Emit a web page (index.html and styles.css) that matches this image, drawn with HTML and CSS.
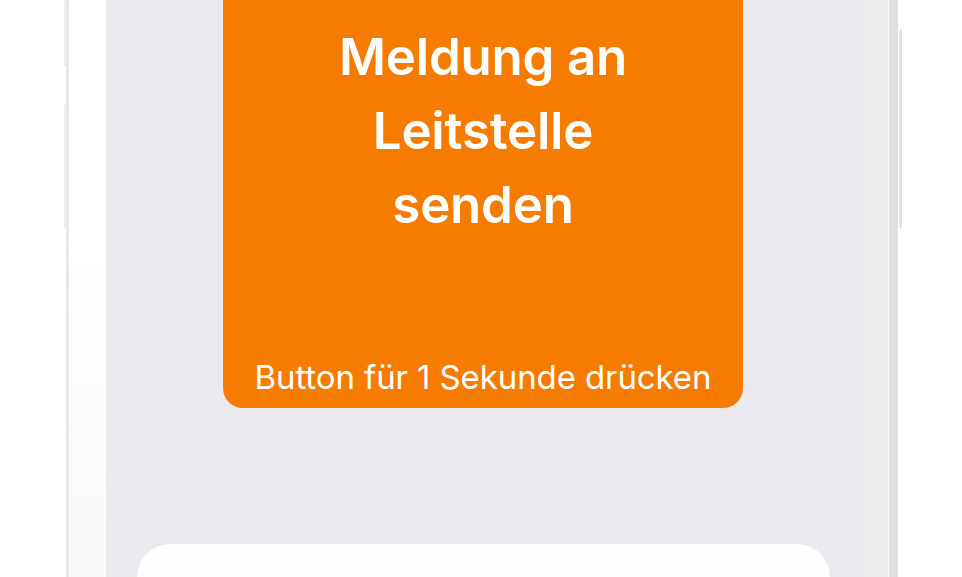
FILE: index.html
```html
<!DOCTYPE html>
<html lang="de">
<head>
  <meta charset="UTF-8" />
  <meta name="viewport" content="width=device-width, initial-scale=1.0" />
  <title>Meldung an Leitstelle</title>
  <link rel="stylesheet" href="styles.css">
</head>
<body>

  <div class="phone">
    <span class="side-btn left-a"></span>
    <span class="side-btn left-b"></span>
    <span class="side-btn right-a"></span>

    <div class="bezel-left"></div>

    <div class="screen">
      <div class="alert-btn">
        <h1 class="alert-title">Meldung an<br>Leitstelle<br>senden</h1>
        <p class="alert-hint">Button für 1 Sekunde drücken</p>
      </div>
      <div class="card"></div>
    </div>

    <div class="bezel-right">
      <div class="bezel-inner"></div>
      <div class="bezel-edge"></div>
    </div>
  </div>

</body>
</html>
```

FILE: styles.css
```css
body {
  font-family: Inter, "Noto Sans", sans-serif;
  background: #fff;
  margin: 0;
  padding: 0;
  width: 962px;
  height: 577px;
  overflow: hidden;
}
.phone {
  position: relative;
  display: flex;
  margin-left: 66px;
  width: 832px;
  height: 577px;
}
.side-btn {
  position: absolute;
  width: 2px;
  background: #ececec;
  border-radius: 2px;
}
.left-a { left: -2px; top: 0; height: 66px; }
.left-b { left: -2px; top: 104px; height: 124px; }
.right-a { right: -4px; top: 29px; height: 199px; width: 3px; background: #e2e2e2; }

.bezel-left {
  width: 37px;
  border-left: 3px solid #e8e8e8;
  background: linear-gradient(to bottom, #ffffff 40%, #f9f9f9);
}
.screen {
  flex: 1;
  background: #e9e9ee;
  display: flex;
  flex-direction: column;
  align-items: center;
}
.alert-btn {
  flex-shrink: 0;
  width: 520px;
  height: 408px;
  background: #f57c00;
  border-radius: 0 0 20px 20px;
  color: #fff;
  display: flex;
  flex-direction: column;
  align-items: center;
  text-align: center;
}
.alert-title {
  margin: 20px 0 0;
  font-size: 51px;
  font-weight: 600;
  line-height: 74px;
  letter-spacing: -0.2px;
}
.alert-hint {
  margin: auto 0 11px;
  font-size: 33px;
  font-weight: 400;
  line-height: 40px;
  letter-spacing: -0.1px;
}
.card {
  flex-shrink: 0;
  margin-top: 136px;
  width: 693px;
  height: 33px;
  background: #fefefe;
  border-radius: 50px 50px 0 0;
}
.bezel-right {
  width: 38px;
  display: flex;
}
.bezel-inner {
  width: 28px;
  background: #ebebeb;
  border-right: 1px solid #f6f6f6;
}
.bezel-edge {
  flex: 1;
  background: #dfdfdf;
}
```
